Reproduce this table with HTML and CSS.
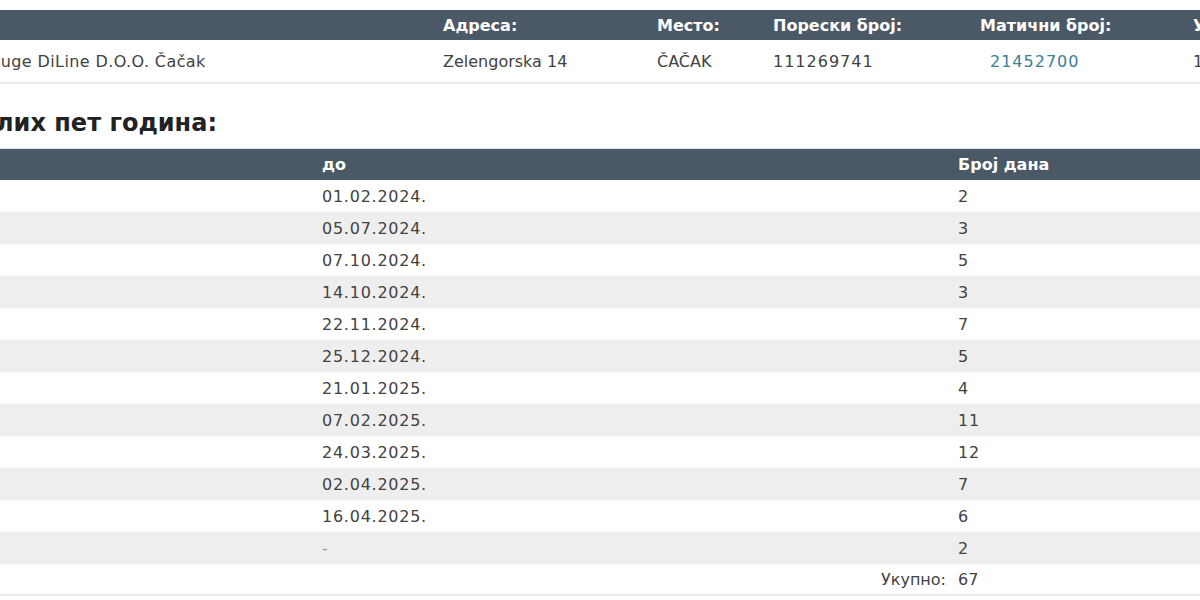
FILE: index.html
```html
<!DOCTYPE html>
<html lang="sr">
<head>
<meta charset="utf-8">
<title>Подаци о фирми</title>
<link rel="stylesheet" href="styles.css">
</head>
<body>
<div class="page">
  <table class="info">
    <colgroup>
      <col class="c-name"><col class="c-addr"><col class="c-city"><col class="c-pib"><col class="c-mb"><col class="c-last">
    </colgroup>
    <thead>
      <tr>
        <th></th><th>Адреса:</th><th>Место:</th><th>Порески број:</th><th>Матични број:</th><th>Уписано:</th>
      </tr>
    </thead>
    <tbody>
      <tr>
        <td class="name">Usluge DiLine D.O.O. Čačak</td>
        <td>Zelengorska 14</td>
        <td>ČAČAK</td>
        <td class="num">111269741</td>
        <td class="num mb"><a href="#" class="link">21452700</a></td>
        <td class="num">15.02.2016.</td>
      </tr>
    </tbody>
  </table>

  <div class="heading-wrap">
    <h2 class="heading">Блокаде у протеклих пет година:</h2>
  </div>

  <table class="days">
    <colgroup>
      <col class="d-from"><col class="d-to"><col class="d-count">
    </colgroup>
    <thead>
      <tr><th>од</th><th>до</th><th>Број дана</th></tr>
    </thead>
    <tbody>
      <tr><td>31.01.2024.</td><td>01.02.2024.</td><td>2</td></tr>
      <tr><td>03.07.2024.</td><td>05.07.2024.</td><td>3</td></tr>
      <tr><td>03.10.2024.</td><td>07.10.2024.</td><td>5</td></tr>
      <tr><td>12.10.2024.</td><td>14.10.2024.</td><td>3</td></tr>
      <tr><td>16.11.2024.</td><td>22.11.2024.</td><td>7</td></tr>
      <tr><td>21.12.2024.</td><td>25.12.2024.</td><td>5</td></tr>
      <tr><td>18.01.2025.</td><td>21.01.2025.</td><td>4</td></tr>
      <tr><td>28.01.2025.</td><td>07.02.2025.</td><td>11</td></tr>
      <tr><td>13.03.2025.</td><td>24.03.2025.</td><td>12</td></tr>
      <tr><td>27.03.2025.</td><td>02.04.2025.</td><td>7</td></tr>
      <tr><td>11.04.2025.</td><td>16.04.2025.</td><td>6</td></tr>
      <tr><td>22.04.2025.</td><td class="dash">-</td><td>2</td></tr>
      <tr class="total"><td></td><td class="total-label">Укупно:</td><td>67</td></tr>
    </tbody>
  </table>
</div>
</body>
</html>
```

FILE: styles.css
```css
html, body {
  margin: 0;
  padding: 0;
  background: #ffffff;
  overflow: hidden;
}

body {
  font-family: "DejaVu Sans", "Noto Sans", sans-serif;
  font-size: 16px;
  color: #424242;
}

.page {
  padding-top: 10px;
}

table {
  border-collapse: collapse;
  table-layout: fixed;
}

th {
  background: #4b5865;
  color: #ffffff;
  font-weight: bold;
  text-align: left;
  padding: 0 10px;
  white-space: nowrap;
  overflow: hidden;
}

td {
  padding: 0 10px;
  white-space: nowrap;
  overflow: hidden;
}

/* top info table */
.info {
  margin-left: -35px;
  width: 1423px;
  border-bottom: 2px solid #ebebeb;
}

.info .c-name { width: 468px; }
.info .c-addr { width: 214px; }
.info .c-city { width: 116px; }
.info .c-pib { width: 207px; }
.info .c-mb { width: 213px; }
.info .c-last { width: 205px; }

.info th { height: 30px; }
.info td { height: 42px; }

.info .name { letter-spacing: 0.4px; }
.info .num { letter-spacing: 1px; }
.info .mb { padding-left: 20px; }

.link {
  color: #3a7f93;
  text-decoration: none;
}

/* heading */
.heading-wrap {
  margin-left: -500px;
  width: 717px;
  padding-top: 24px;
  padding-bottom: 10px;
}

.heading {
  margin: 0;
  text-align: right;
  white-space: nowrap;
  font-size: 24px;
  font-weight: bold;
  color: #222222;
  line-height: 30px;
}

/* days table */
.days {
  margin-left: -300px;
  width: 1600px;
  border-top: 1px solid #dde1e6;
  border-bottom: 2px solid #ebebeb;
}

.days .d-from { width: 612px; }
.days .d-to { width: 636px; }
.days .d-count { width: 352px; }

.days th { height: 31px; font-size: 16px; }
.days td { height: 32px; letter-spacing: 0.75px; }

.days tbody tr:nth-child(even) { background: #efeeee; }

.days .dash { color: #9a9a9a; }

.days .total td { height: 30px; letter-spacing: 0; }
.days .total-label {
  text-align: right;
  padding-right: 2px;
}
```
